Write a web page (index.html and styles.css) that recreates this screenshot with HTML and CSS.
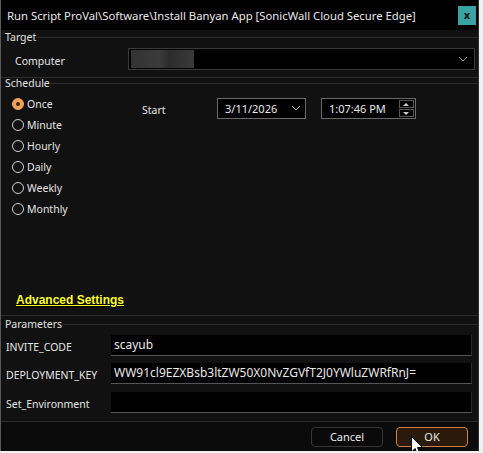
FILE: index.html
```html
<!DOCTYPE html>
<html lang="en">
<head>
    <meta charset="UTF-8">
    <title>Run Script</title>
    <link rel="stylesheet" href="styles.css">
</head>
<body>
    <div class="dialog">
        <div class="titlebar">
            <span class="title">Run Script ProVal\Software\Install Banyan App [SonicWall Cloud Secure Edge]</span>
            <span class="close">x</span>
        </div>

        <!-- Target -->
        <div class="group group-target">
            <div class="legend"><span>Target</span></div>
            <div class="row computer-row">
                <span class="row-label">Computer</span>
                <div class="combo">
                    <span class="blurred"></span>
                    <svg class="chev" width="10" height="6" viewBox="0 0 10 6"><path d="M1 1 L5 5 L9 1" fill="none" stroke="#9a9a9a" stroke-width="1"/></svg>
                </div>
            </div>
        </div>

        <!-- Schedule -->
        <div class="group group-schedule">
            <div class="legend"><span>Schedule</span></div>
            <div class="schedule-body">
                <ul class="radios">
                    <li><span class="radio checked"></span>Once</li>
                    <li><span class="radio"></span>Minute</li>
                    <li><span class="radio"></span>Hourly</li>
                    <li><span class="radio"></span>Daily</li>
                    <li><span class="radio"></span>Weekly</li>
                    <li><span class="radio"></span>Monthly</li>
                </ul>
                <div class="start">
                    <span class="start-label">Start</span>
                    <div class="picker date">
                        <span>3/11/2026</span>
                        <svg width="10" height="6" viewBox="0 0 10 6"><path d="M1 1 L5 5 L9 1" fill="none" stroke="#bbb" stroke-width="1"/></svg>
                    </div>
                    <div class="picker time">
                        <span>1:07:46 PM</span>
                        <div class="spin">
                            <span class="up"></span>
                            <span class="down"></span>
                        </div>
                    </div>
                </div>
            </div>
            <a class="advanced" href="#">Advanced Settings</a>
        </div>

        <!-- Parameters -->
        <div class="group group-params">
            <div class="legend"><span>Parameters</span></div>
            <div class="param">
                <span class="param-label">INVITE_CODE</span>
                <div class="field">scayub</div>
            </div>
            <div class="param">
                <span class="param-label">DEPLOYMENT_KEY</span>
                <div class="field">WW91cl9EZXBsb3ltZW50X0NvZGVfT2J0YWluZWRfRnJ=</div>
            </div>
            <div class="param">
                <span class="param-label">Set_Environment</span>
                <div class="field"></div>
            </div>
        </div>

        <div class="footer">
            <button class="btn">Cancel</button>
            <button class="btn ok">OK</button>
            <svg class="cursor" width="13" height="20" viewBox="0 0 13 20"><path d="M0.5 0.5 L0.5 16 L4 12.5 L6.5 18.5 L9 17.5 L6.5 11.5 L11.5 11.5 Z" fill="#fff" stroke="#000" stroke-width="1"/></svg>
        </div>
    </div>
</body>
</html>
```

FILE: styles.css
```css
body {
    margin: 0;
    background: #f0f0f0;
    font-family: "Noto Sans", "Open Sans", sans-serif;
    font-size: 10.5px;
    color: #e4e4e4;
}
.dialog {
    width: 479px;
    height: 451px;
    background: #111111;
    border-right: 1px solid #2e2e2e;
    border-left: 1px solid #5a5a5a;
    box-sizing: border-box;
    display: flex;
    flex-direction: column;
}
.titlebar {
    height: 30px;
    background: #000;
    display: flex;
    align-items: center;
    justify-content: space-between;
    padding: 0 2px 0 6px;
    flex-shrink: 0;
}
.title {
    color: #e8e8e8;
    font-size: 11.3px;
    white-space: nowrap;
}
.close {
    width: 18px;
    height: 19px;
    background: #3aa3a5;
    color: #111;
    font-weight: bold;
    font-size: 11px;
    line-height: 17px;
    text-align: center;
}
.group {
    border-bottom: 1px solid #2a2a2a;
}
.legend {
    display: flex;
    align-items: center;
    height: 14px;
    padding-left: 4px;
}
.legend::after {
    content: "";
    flex: 1;
    border-top: 1px solid #2a2a2a;
}
.legend span {
    color: #e0e0e0;
    line-height: 14px;
}

/* Target */
.group-target {
    height: 47px;
}
.computer-row {
    display: flex;
    align-items: center;
    margin-top: 4px;
}
.row-label {
    width: 127px;
    padding-left: 14px;
    box-sizing: border-box;
    margin-top: 4px;
}
.combo {
    flex: 1;
    height: 20px;
    margin-right: 3px;
    background: #000;
    border: 1px solid #3a3a3a;
    display: flex;
    align-items: center;
    justify-content: space-between;
    padding: 0 6px 0 2px;
}
.blurred {
    width: 63px;
    height: 18px;
    background: linear-gradient(90deg, #333 0%, #3b3b3b 45%, #2c2c2c 60%, #3a3a3a 100%);
}

/* Schedule */
.group-schedule {
    height: 239px;
    margin-top: -2px;
    display: flex;
    flex-direction: column;
}
.schedule-body {
    display: flex;
    margin-top: 3px;
}
.radios {
    list-style: none;
    margin: 0;
    padding: 0 0 0 11px;
    width: 130px;
}
.radios li {
    height: 21px;
    display: flex;
    align-items: center;
    gap: 3px;
}
.radio {
    width: 12px;
    height: 12px;
    border: 1px solid #cfcfcf;
    border-radius: 50%;
    box-sizing: border-box;
    display: flex;
    align-items: center;
    justify-content: center;
}
.radio.checked {
    background: #f2a157;
    border-color: #f2a157;
}
.radio.checked::after {
    content: "";
    width: 4px;
    height: 4px;
    border-radius: 50%;
    background: #3a2410;
}
.start {
    display: flex;
    align-items: center;
    height: 22px;
    margin-top: 4px;
}
.start-label {
    width: 75px;
    margin-top: 4px;
}
.picker {
    height: 21px;
    background: #000;
    border: 1px solid #6a6a6a;
    box-sizing: border-box;
    display: flex;
    align-items: center;
    justify-content: space-between;
    color: #e8e8e8;
    font-size: 11px;
}
.picker.date {
    width: 89px;
    padding: 0 4px 0 7px;
    margin-right: 15px;
}
.picker.time {
    width: 95px;
    padding: 0 1px 0 7px;
}
.spin {
    width: 15px;
    height: 17px;
    display: flex;
    flex-direction: column;
    gap: 1px;
}
.spin span {
    flex: 1;
    border: 1px solid #555;
    position: relative;
}
.spin .up::after,
.spin .down::after {
    content: "";
    position: absolute;
    left: 3px;
    top: 2px;
    border-left: 3px solid transparent;
    border-right: 3px solid transparent;
}
.spin .up::after {
    border-bottom: 3px solid #ccc;
}
.spin .down::after {
    border-top: 3px solid #ccc;
}
.advanced {
    margin-top: auto;
    margin-bottom: 8px;
    margin-left: 15px;
    color: #ffff2a;
    font-weight: bold;
    font-family: "Liberation Sans", Arial, sans-serif;
    font-size: 12px;
    text-shadow: 1px 1px 0 #000;
    align-self: flex-start;
}

/* Parameters */
.group-params {
    height: 104px;
    margin-top: 1px;
}
.param {
    display: flex;
    align-items: center;
    height: 28.5px;
}
.param-label {
    width: 105px;
    padding-left: 5px;
    margin-top: 3px;
}
.field {
    flex: 1;
    height: 20px;
    margin-right: 6px;
    background: #000;
    border-bottom: 1px solid #555;
    border-right: 1px solid #2a2a2a;
    padding: 0 3px;
    line-height: 19px;
    font-size: 12px;
    color: #e8e8e8;
    white-space: nowrap;
    overflow: hidden;
}

/* Footer */
.footer {
    flex: 1;
    background: #0b0b0b;
    display: flex;
    align-items: center;
    justify-content: flex-end;
    gap: 13px;
    padding-right: 10px;
    position: relative;
}
.btn {
    width: 72px;
    height: 20px;
    border-radius: 4px;
    border: 1px solid #363636;
    background: #0a0a0a;
    color: #e8e8e8;
    font-family: "Noto Sans", "Open Sans", sans-serif;
    font-size: 11px;
    padding: 0;
}
.btn.ok {
    background: #2a1a0b;
    border-color: #cf7f45;
}
.cursor {
    position: absolute;
    left: 410px;
    top: 14px;
}
```
